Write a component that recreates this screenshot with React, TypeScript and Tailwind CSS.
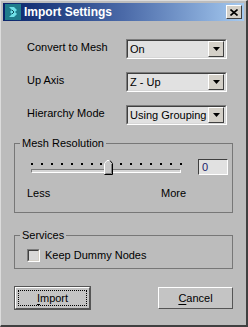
import React from 'react';

const FONT = { fontFamily: '"Liberation Sans", Arial, sans-serif' };

function Dropdown({ value }: { value: string }) {
  return (
    <div className="flex h-[20px] w-[101px] items-center border-t border-l border-t-[#7c7c7c] border-l-[#7c7c7c] border-b border-r border-b-white border-r-white">
      <div className="flex h-full flex-1 items-center border-t border-l border-t-[#3f3f3f] border-l-[#3f3f3f] border-b border-r border-b-[#d6d6d6] border-r-[#d6d6d6] bg-[#e1e1e1] pl-[2px] pr-[1px]">
        <span className="flex-1 text-[11px] text-black">{value}</span>
        <div className="flex h-[16px] w-[16px] items-center justify-center border-t border-l border-t-white border-l-white border-b border-r border-b-[#404040] border-r-[#404040] bg-[#d4d0c8]">
          <svg width="7" height="4" viewBox="0 0 7 4">
            <path d="M0 0h7L3.5 4z" fill="#000" />
          </svg>
        </div>
      </div>
    </div>
  );
}

function Row({ label, value }: { label: string; value: string }) {
  return (
    <div className="flex h-[20px] items-center">
      <span className="w-[99px] pb-[5px] text-[11px] leading-[14px] text-black">{label}</span>
      <Dropdown value={value} />
    </div>
  );
}

function Group({ title, className, children }: { title: string; className: string; children: React.ReactNode }) {
  return (
    <div className={`relative mx-[11px] border border-[#777777] ${className}`}>
      <span className="absolute left-[5px] top-[-8px] bg-[#bcbcbc] px-[2px] text-[11px] leading-[14px] text-black">
        {title}
      </span>
      {children}
    </div>
  );
}

function Button({ label, focused }: { label: string; focused?: boolean }) {
  return (
    <div
      className={`flex h-[22px] w-[75px] items-center justify-center border-t border-l border-t-white border-l-white border-b border-r border-b-[#555555] border-r-[#555555] bg-[#c4c4c4] text-[11px] text-black ${focused ? 'outline outline-1 outline-[#555555]' : ''}`}
    >
      <div
        className={`flex h-[16px] w-[69px] items-center justify-center ${focused ? 'border border-dotted border-black' : ''}`}
      >
        <span>
          <span className="underline underline-offset-2">{label[0]}</span>
          {label.slice(1)}
        </span>
      </div>
    </div>
  );
}

export default function App() {
  const dots = Array.from({ length: 16 }, (_, i) => i);
  return (
    <div
      style={FONT}
      className="flex h-[327px] w-[248px] flex-col border-t border-l border-t-[#dcdcdc] border-l-[#dcdcdc] border-b-2 border-r-2 border-b-[#404040] border-r-[#404040] bg-[#bcbcbc] p-[2px]"
    >
      {/* title bar */}
      <div className="flex h-[18px] items-center bg-gradient-to-r from-[#0a246a] via-[#4b6aa8] to-[#a6caf0] pl-[2px] pr-[2px]">
        <div className="flex h-[16px] w-[16px] items-center justify-center bg-[#1f7c8c]">
          <svg width="12" height="12" viewBox="0 0 12 12">
            <path d="M2 1h5l3 3-2 2 2 2-3 3H2l3-3-2-2 2-2z" fill="#6fe0e8" />
            <path d="M5 4l2 2-2 2" fill="none" stroke="#0d4b58" strokeWidth="1" />
          </svg>
        </div>
        <span className="ml-[3px] flex-1 text-[12px] font-bold text-white">Import Settings</span>
        <div className="flex h-[14px] w-[16px] items-center justify-center border-t border-l border-t-white border-l-white border-b border-r border-b-[#404040] border-r-[#404040] bg-[#d4d0c8]">
          <svg width="8" height="7" viewBox="0 0 8 7">
            <path d="M0.5 0.5l7 6M7.5 0.5l-7 6" stroke="#000" strokeWidth="1.6" />
          </svg>
        </div>
      </div>

      {/* settings rows */}
      <div className="flex flex-col gap-[13px] pl-[24px] pt-[18px]">
        <Row label="Convert to Mesh" value="On" />
        <Row label="Up Axis" value="Z - Up" />
        <Row label="Hierarchy Mode" value="Using Grouping" />
      </div>

      <Group title="Mesh Resolution" className="mt-[18px] h-[70px]">
        <div className="flex items-start pl-[16px] pt-[19px]">
          <div className="relative h-[18px] w-[151px]">
            <div className="flex justify-between">
              {dots.map((d) => (
                <div key={d} className="h-[2px] w-[2px] bg-black" />
              ))}
            </div>
            <div className="mt-[4px] h-[4px] w-[150px] border-t border-l border-t-[#7c7c7c] border-l-[#7c7c7c] border-b border-r border-b-white border-r-white bg-[#d4d4d4]" />
            <svg className="absolute left-[73px] top-[-3px]" width="9" height="15" viewBox="0 0 9 15">
              <path d="M0.5 14.5V3.5L3 0.5h3l2.5 3v11z" fill="#c8c8c8" stroke="none" />
              <path d="M0.5 14V3.5L3 0.5h3" fill="none" stroke="#fff" />
              <path d="M6 0.5l2.5 3v11H0.5" fill="none" stroke="#000" />
              <path d="M7.5 4v9.5H1.5" fill="none" stroke="#808080" />
            </svg>
          </div>
          <div className="ml-[16px] mt-[-4px] flex h-[16px] w-[30px] items-center border-t border-l border-t-[#3f3f3f] border-l-[#3f3f3f] border-b border-r border-b-white border-r-white bg-[#e1e1e1] pl-[3px] text-[11px] text-[#1a1a6a]">
            0
          </div>
        </div>
        <div className="flex pl-[12px] pt-[4px] text-[11px] text-black">
          <span className="w-[134px]">Less</span>
          <span>More</span>
        </div>
      </Group>

      <Group title="Services" className="mt-[22px] h-[34px]">
        <div className="flex items-center pl-[12px] pt-[11px]">
          <div className="h-[13px] w-[13px] border-t border-l border-t-[#7c7c7c] border-l-[#7c7c7c] border-b border-r border-b-white border-r-white">
            <div className="h-full w-full border-t border-l border-t-[#404040] border-l-[#404040] border-b border-r border-b-[#d4d0c8] border-r-[#d4d0c8] bg-[#d8d8d8]" />
          </div>
          <span className="ml-[5px] text-[11px] text-black">Keep Dummy Nodes</span>
        </div>
      </Group>

      <div className="mt-[18px] flex justify-between pl-[12px] pr-[11px]">
        <Button label="Import" focused />
        <Button label="Cancel" />
      </div>
    </div>
  );
}
